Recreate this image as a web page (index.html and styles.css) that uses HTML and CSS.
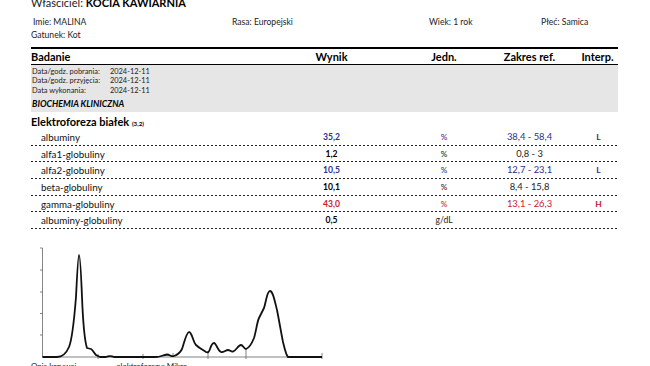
FILE: index.html
```html
<!DOCTYPE html>
<html lang="pl">
<head>
<meta charset="utf-8">
<link rel="stylesheet" href="styles.css">
</head>
<body>
<div class="page">
  <div class="owner">Właściciel: <b>KOCIA KAWIARNIA</b></div>
  <div class="info">
    <span class="i-name">Imie: MALINA</span>
    <span class="i-race">Rasa: Europejski</span>
    <span class="i-age">Wiek: 1 rok</span>
    <span class="i-sex">Płeć: Samica</span>
  </div>
  <div class="info info2"><span>Gatunek: Kot</span></div>

  <div class="table">
    <div class="grid head">
      <div class="h-name">Badanie</div>
      <div class="ctr">Wynik</div>
      <div class="ctr c-unit">Jedn.</div>
      <div class="ctr">Zakres ref.</div>
      <div class="ctr">Interp.</div>
    </div>
    <div class="meta">
      <div class="meta-row"><span class="m-l">Data/godz. pobrania:</span><span>2024-12-11</span></div>
      <div class="meta-row"><span class="m-l">Data/godz. przyjęcia:</span><span>2024-12-11</span></div>
      <div class="meta-row"><span class="m-l">Data wykonania:</span><span>2024-12-11</span></div>
      <div class="section">BIOCHEMIA KLINICZNA</div>
    </div>
    <div class="group">Elektroforeza białek <small>(3,2)</small></div>

    <div class="grid row low">
      <div class="r-name">albuminy</div>
      <div class="ctr val">35,2</div>
      <div class="ctr c-unit unit">%</div>
      <div class="ctr rng">38,4 - 58,4</div>
      <div class="ctr flag">L</div>
    </div>
    <div class="grid row">
      <div class="r-name">alfa1-globuliny</div>
      <div class="ctr val">1,2</div>
      <div class="ctr c-unit unit">%</div>
      <div class="ctr rng">0,8 - 3</div>
      <div class="ctr flag"></div>
    </div>
    <div class="grid row low">
      <div class="r-name">alfa2-globuliny</div>
      <div class="ctr val">10,5</div>
      <div class="ctr c-unit unit">%</div>
      <div class="ctr rng">12,7 - 23,1</div>
      <div class="ctr flag">L</div>
    </div>
    <div class="grid row">
      <div class="r-name">beta-globuliny</div>
      <div class="ctr val">10,1</div>
      <div class="ctr c-unit unit">%</div>
      <div class="ctr rng">8,4 - 15,8</div>
      <div class="ctr flag"></div>
    </div>
    <div class="grid row high">
      <div class="r-name">gamma-globuliny</div>
      <div class="ctr val">43,0</div>
      <div class="ctr c-unit unit">%</div>
      <div class="ctr rng">13,1 - 26,3</div>
      <div class="ctr flag">H</div>
    </div>
    <div class="grid row">
      <div class="r-name">albuminy-globuliny</div>
      <div class="ctr val">0,5</div>
      <div class="ctr c-unit unit unit-wide">g/dL</div>
      <div class="ctr rng"></div>
      <div class="ctr flag"></div>
    </div>
  </div>

  <svg class="chart" width="300" height="120" viewBox="30 240 300 120" xmlns="http://www.w3.org/2000/svg">
    <g stroke="#666" stroke-width="0.8" fill="none">
      <line x1="42.5" y1="246" x2="42.5" y2="355"/>
      <line x1="42.5" y1="355" x2="322" y2="355"/>
      <line x1="40" y1="246" x2="42.5" y2="246"/>
      <line x1="40" y1="268" x2="42.5" y2="268"/>
      <line x1="40" y1="290" x2="42.5" y2="290"/>
      <line x1="40" y1="311.5" x2="42.5" y2="311.5"/>
      <line x1="40" y1="333" x2="42.5" y2="333"/>
      <line x1="98" y1="352" x2="98" y2="357"/>
      <line x1="143" y1="352" x2="143" y2="357"/>
      <line x1="173" y1="351" x2="173" y2="355"/>
      <line x1="208" y1="349" x2="208" y2="357"/>
      <line x1="246" y1="347" x2="246" y2="357"/>
      <line x1="322" y1="351" x2="322" y2="357"/>
    </g>
    <path fill="none" stroke="#111" stroke-width="1.8" stroke-linejoin="round" d="M42.5 355 L57 355 C62 355 66 352 69 345 C72 338 74 320 76 295 C77 275 78 253 79 253 C80 253 81 270 82 295 C83 320 85 340 87 346 L91 347 C93 348 94 351 96 353 L100 355 L106 355 C108 354 112 354 114 355 L156 355 C160 355 163 353 167 352.5 C170 352.5 171 355 174 354 C177 353 180 351 182 347 C184 342 186 331 189 330 C192 330 193 340 196 343 C199 346 203 348 206 350 C208 351 209 350 210 347 C211 344 212 341 214 341 C216 341 218 349 221 350 C223 351 226 348 228 348 C230 348 231 350 233 349.5 C236 349 238 343 241 343 C243 343 244 347 246 347 C249 346 252 341 254 336 C256 330 257 320 259 316 C261 312 262 310 264 306 C266 300 267 289 270 289 C273 289 275 300 277 308 C279 318 281 330 283 340 C285 348 286 353 288 355 L322 355"/>
  </svg>
  <div class="foot"><span>Opis krzywej</span><span class="foot-r">elektroforezy: Mikro</span></div>
</div>
</body>
</html>
```
FILE: styles.css
```css
html, body {
  margin: 0;
  padding: 0;
  background: #fff;
}
body {
  font-family: Lato, "Open Sans", sans-serif;
  color: #111;
  width: 650px;
  height: 366px;
  overflow: hidden;
}
.page {
  padding-left: 31px;
  width: 587px;
}
.owner {
  font-size: 11px;
  line-height: 11px;
  margin-top: -3px;
  height: 11px;
  color: #222;
}
.owner b {
  font-weight: 700;
  color: #000;
}
.info {
  display: flex;
  font-size: 8.6px;
  line-height: 13.3px;
  color: #222;
  margin-top: 8px;
  white-space: nowrap;
}
.info2 {
  margin-top: 0;
}
.i-name { width: 199px; padding-left: 2px; }
.i-race { width: 197px; }
.i-age { width: 112px; }
.table {
  margin-top: 4.4px;
  border-top: 2px solid #000;
}
.grid {
  display: grid;
  grid-template-columns: 269px 63px 47px 68px 103px 33px;
}
.c-unit { grid-column: 4; }
.ctr { text-align: center; }
.head {
  height: 15px;
  line-height: 16px;
  font-size: 11px;
  font-weight: 700;
  color: #000;
  border-bottom: 1px solid #000;
}
.meta {
  background: #e6e6e6;
  padding: 2px 0 2.4px 1px;
  font-size: 7.4px;
  color: #222;
  white-space: nowrap;
}
.meta-row {
  display: flex;
  line-height: 9.3px;
}
.m-l { width: 78px; }
.section {
  margin-top: 4.4px;
  font-size: 8.8px;
  line-height: 10px;
  font-weight: 700;
  font-style: italic;
  color: #000;
}
.group {
  font-size: 11px;
  font-weight: 700;
  line-height: 11px;
  padding-top: 4.5px;
  color: #000;
}
.group small {
  font-size: 6.2px;
}
.row {
  height: 16.6px;
  line-height: 16px;
  background-image: repeating-linear-gradient(90deg, #222 0 2.4px, transparent 2.4px 4px);
  background-size: 100% 1px;
  background-repeat: no-repeat;
  background-position: 0 100%;
  font-size: 9.8px;
}
.r-name {
  padding-left: 10px;
  color: #111;
}
.val {
  font-weight: 700;
  font-size: 8.6px;
  color: #000;
}
.unit {
  font-size: 8.2px;
  color: #222;
}
.unit-wide { font-size: 8.6px; }
.rng {
  font-size: 9.4px;
  color: #222;
}
.flag {
  font-weight: 700;
  font-size: 8.4px;
  padding-left: 2px;
}
.low .val, .low .unit, .low .rng, .low .flag { color: #2b2f8f; }
.high .val, .high .unit, .high .rng, .high .flag { color: #c8202a; }
.chart {
  display: block;
  margin-left: -1px;
  margin-top: 13px;
}
.foot {
  display: flex;
  font-size: 8px;
  line-height: 10px;
  margin-top: -1px;
  color: #222;
}
.foot-r { margin-left: 40px; }
```
